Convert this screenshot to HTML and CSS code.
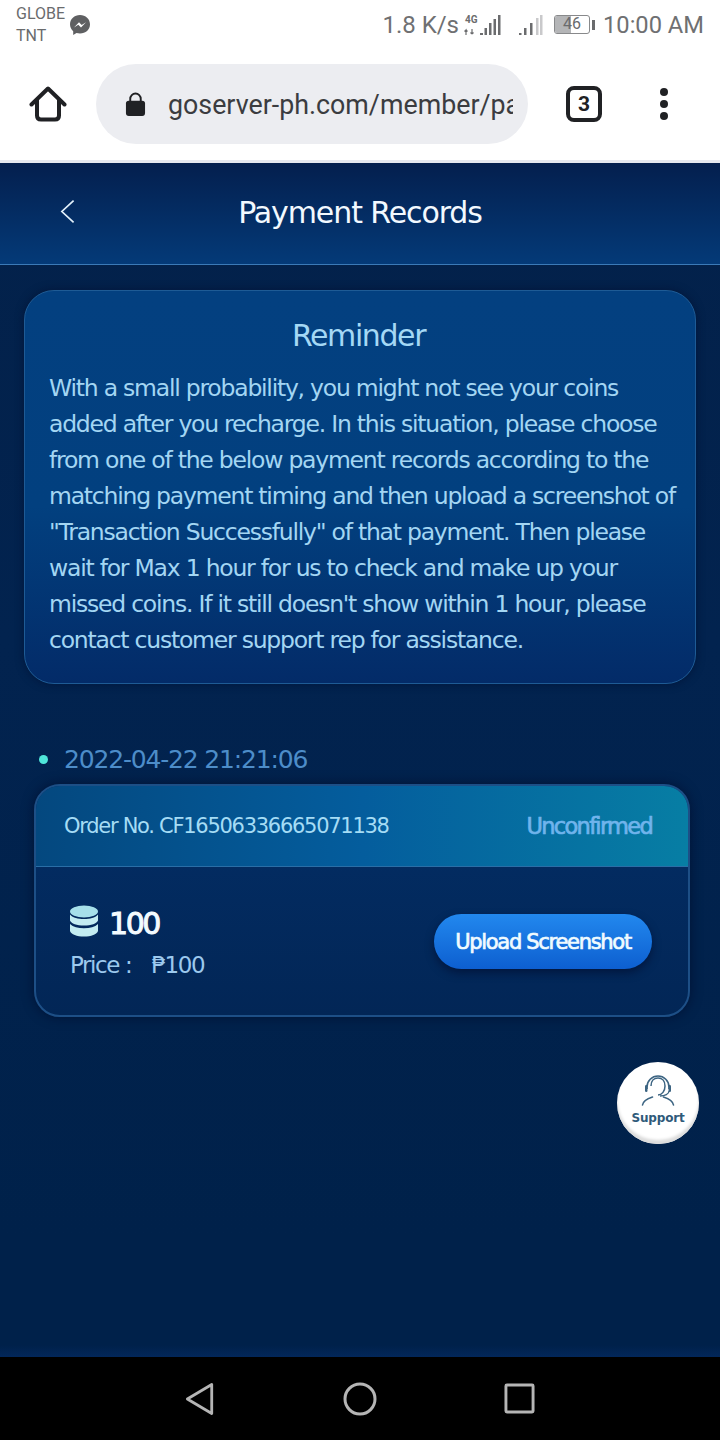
FILE: index.html
```html
<!DOCTYPE html>
<html lang="en">
<head>
<meta charset="utf-8">
<title>Payment Records</title>
<link rel="stylesheet" href="styles.css">
</head>
<body>
<div class="screen">
  <div class="status">
    <div class="carrier"><span>GLOBE</span><span>TNT</span></div>
    <svg class="messenger" viewBox="0 0 22 22"><path d="M11 1C5.400 1 1 5 1 10.300c0 2.800 1.200 5.200 3.200 6.900V21l3.300-1.900c1.100.3 2.300.5 3.500.5 5.600 0 10-4 10-9.300S16.600 1 11 1z" fill="#5f6062"/><path d="M5 13.500l5-5.300 2.700 2.700 4.300-2.700-5 5.300-2.700-2.700z" fill="#fff"/></svg>
    <div class="status-right">
      <span class="speed">1.8 K/s</span>
      <svg class="net" viewBox="0 0 38 24"><text x="1" y="10" class="net-t">4G</text><path d="M2 22l0-5-1.500 1.500M2 17l1.500 1.500M8 16v5M8 21l-1.500-1.500M8 21l1.500-1.500" fill="none" stroke="#6b6c6e" stroke-width="1.200"/><path d="M16 20h3v2h-3zM20.500 15h2.500v7h-2.500zM25 10h2.500v12H25zM29.500 6h2.500v16h-2.500zM34 2h2.500v20H34z" fill="#6b6c6e"/></svg>
      <svg class="signal" viewBox="0 0 24 24"><path d="M0 20h2.500v2H0zM5 15h2.500v7H5zM11 10h2.500v12H11z" fill="#6b6c6e"/><path d="M17 5h2.500v17H17zM21 2h2.500v20H21z" fill="#c9c9cb"/></svg>
      <div class="battery"><div class="battery-body"><div class="battery-fill"></div><span class="battery-num">46</span></div><div class="battery-tip"></div></div>
      <span class="clock">10:00 AM</span>
    </div>
  </div>

  <div class="toolbar">
    <svg class="home" viewBox="0 0 38 38"><path d="M2.500 19.500L19 3.500l16.500 16M8 15v15.500q0 4 4 4h14q4 0 4-4V15" fill="none" stroke="#202124" stroke-width="4" stroke-linecap="round" stroke-linejoin="round"/></svg>
    <div class="omnibox">
      <svg class="lock" viewBox="0 0 22 26"><path d="M5.500 10V7a5.500 5.500 0 0 1 11 0v3" fill="none" stroke="#202124" stroke-width="2"/><rect x="1" y="9" width="20" height="16" rx="3" fill="#202124"/></svg>
      <div class="url">goserver-ph.com/member/pa</div>
    </div>
    <div class="tabs">3</div>
    <div class="dots"><i></i><i></i><i></i></div>
  </div>

  <div class="page">
    <header class="head">
      <svg class="back" viewBox="0 0 16 26"><path d="M14.500 1.500L2 13l12.500 11.500" fill="none" stroke="#e3f1fb" stroke-width="1.800"/></svg>
      <h1>Payment Records</h1>
    </header>

    <section class="reminder">
      <h2>Reminder</h2>
      <p><span>With a small probability, you might not see your coins</span><span>added after you recharge. In this situation, please choose</span><span>from one of the below payment records according to the</span><span>matching payment timing and then upload a screenshot of</span><span>"Transaction Successfully" of that payment. Then please</span><span>wait for Max 1 hour for us to check and make up your</span><span>missed coins. If it still doesn't show within 1 hour, please</span><span>contact customer support rep for assistance.</span></p>
    </section>

    <div class="record-date"><i class="bullet"></i><span>2022-04-22 21:21:06</span></div>
    <section class="order">
      <div class="order-top">
        <span class="order-no">Order No. CF16506336665071138</span>
        <span class="order-state">Unconfirmed</span>
      </div>
      <div class="order-body">
        <div class="order-info">
          <div class="coins">
            <svg class="coin-icon" viewBox="0 0 28 32"><ellipse cx="14" cy="6.500" rx="14" ry="6" fill="#a6e0ea"/><path d="M0 9.500c3 3.500 8 4.500 14 4.500s11-1 14-4.500v6c-1 3-7 5-14 5s-13-2-14-5z" fill="#c3ecf1"/><path d="M0 19c3 3 8 4.200 14 4.200S25 22 28 19v7c-1 3.500-7 5.500-14 5.500S1 29.500 0 26z" fill="#c3ecf1"/></svg>
            <b>100</b>
          </div>
          <div class="price"><span>Price :</span><span>₱100</span></div>
        </div>
        <button class="upload">Upload Screenshot</button>
      </div>
    </section>

    <div class="support">
      <svg viewBox="0 0 34 32"><path d="M6 15V13a11 11 0 0 1 22 0v2" fill="none" stroke="#3c6482" stroke-width="1.600"/><rect x="4" y="11" width="2.500" height="7" rx="1.200" fill="#3c6482"/><rect x="27.500" y="11" width="2.500" height="7" rx="1.200" fill="#3c6482"/><path d="M10 12c0-5 3-8 7-8s7 3 7 8-3 9-7 9" fill="none" stroke="#3c6482" stroke-width="1.500"/><path d="M28 17c0 3-4 5-9 5" fill="none" stroke="#3c6482" stroke-width="1.300"/><path d="M1.500 31c.5-4 4-6 10-8M32.500 31c-.5-4-4-6-10-8" fill="none" stroke="#3c6482" stroke-width="1.600" stroke-linecap="round"/></svg>
      <span>Support</span>
    </div>
  </div>

  <nav class="sysnav">
    <svg viewBox="0 0 32 36" class="nav-back"><path d="M28.500 2.500v31L2.500 18z" fill="none" stroke="#b5b5b5" stroke-width="3" stroke-linejoin="round"/></svg>
    <svg viewBox="0 0 36 36" class="nav-home"><circle cx="18" cy="18" r="15" fill="none" stroke="#b5b5b5" stroke-width="3"/></svg>
    <svg viewBox="0 0 32 32" class="nav-square"><rect x="2" y="2" width="28" height="28" rx="1" fill="none" stroke="#b5b5b5" stroke-width="3"/></svg>
  </nav>
</div>
</body>
</html>
```
FILE: styles.css
```css
* { box-sizing: border-box; }
html, body { margin: 0; padding: 0; }
body { width: 720px; height: 1440px; overflow: hidden; font-family: "DejaVu Sans", sans-serif; }
.screen { width: 720px; height: 1440px; display: flex; flex-direction: column; background: #fff; }

.status { height: 54px; display: flex; align-items: flex-start; padding: 3px 16px 0; font-family: Roboto, sans-serif; color: #6a6b6d; flex: none; }
.carrier { display: flex; flex-direction: column; font-size: 16px; line-height: 22px; width: 53px; }
.messenger { width: 22px; height: 22px; margin-top: 11px; }
.status-right { margin-left: auto; display: flex; align-items: center; height: 43px; }
.speed, .clock { font-size: 24px; color: #6f7072; white-space: nowrap; }
.clock { font-size: 23.700px; }
.speed { margin-right: 5px; }
.net { width: 38px; height: 24px; margin-right: 17px; }
.net-t { font: 700 10px Roboto, sans-serif; fill: #6b6c6e; }
.signal { width: 24px; height: 24px; margin-right: 11px; }
.battery { display: flex; align-items: center; margin-right: 8px; }
.battery-body { position: relative; width: 36px; height: 19px; border: 1.500px solid #88898b; border-radius: 3px; overflow: hidden; }
.battery-fill { width: 46%; height: 100%; background: #b4b5b7; }
.battery-num { position: absolute; inset: 0; text-align: center; font-size: 16px; line-height: 16px; color: #6a6b6d; }
.battery-tip { width: 3px; height: 10px; background: #6a6b6d; margin-left: 2px; }

.toolbar { height: 106px; flex: none; display: flex; align-items: center; padding: 0 0 6px 29px; }
.home { width: 38px; height: 38px; margin-right: 29px; flex: none; }
.omnibox { width: 432px; height: 80px; border-radius: 40px; background: #ecedf1; display: flex; align-items: center; padding: 0 15px 0 29px; flex: none; }
.lock { width: 21px; height: 25px; margin-right: 22px; flex: none; }
.url { font-family: Roboto, sans-serif; font-size: 26.800px; padding-top: 2px; color: #3b3c40; white-space: nowrap; overflow: hidden; flex: 1; min-width: 0; }
.tabs { width: 36px; height: 36px; margin-left: 38px; border: 4px solid #202124; border-radius: 8px; font: 700 21px/28px Roboto, sans-serif; text-align: center; color: #202124; flex: none; }
.dots { margin-left: 58px; display: flex; flex-direction: column; gap: 4px; flex: none; }
.dots i { display: block; width: 8px; height: 8px; border-radius: 50%; background: #202124; }

.page { position: relative; flex: 1; min-height: 0; background: linear-gradient(180deg, #03214a 0%, #02234f 40%, #00214a 90%, #00214a 99%, #02275a 100%); border-top: 3px solid #e6e8ef; }
.head { height: 102px; display: flex; align-items: center; justify-content: center; position: relative; padding-bottom: 2px; background: linear-gradient(180deg, #041f4e 0%, #043a78 100%); border-bottom: 1px solid #3b7ab8; }
.head h1 { margin: 0; font-weight: 400; font-size: 30px; letter-spacing: -1.100px; color: #f2f9ff; }
.back { position: absolute; left: 60px; top: 36px; width: 15px; height: 25px; }

.reminder { margin: 25px 24px 0; height: 394px; padding: 27px 24px 0 24px; border-radius: 30px; border: 1px solid #1e5b95; background: linear-gradient(180deg, #034080 0%, #02407f 55%, #032b68 100%); box-shadow: 0 0 8px rgba(0, 10, 40, .5); }
.reminder h2 { margin: 0; padding-right: 3px; text-align: center; font-weight: 400; font-size: 30px; line-height: 36px; letter-spacing: -1.400px; color: #a4d8f5; }
.reminder p { margin: 16px 0 0; font-size: 23.500px; line-height: 36px; color: #a3d6f3; letter-spacing: -1.230px; }
.reminder p span { display: block; white-space: nowrap; }

.record-date { display: flex; align-items: center; margin: 57px 0 0 39px; height: 36px; color: #4d8dc9; font-size: 25px; letter-spacing: -1.170px; }
.bullet { width: 9px; height: 9px; border-radius: 50%; background: #4fe6da; margin-right: 16px; }

.order { margin: 7px 30px 0 34px; height: 233px; border-radius: 26px; border: 2px solid #1d4f86; overflow: hidden; background: linear-gradient(180deg, #032e66 0%, #022656 100%); box-shadow: 0 0 12px rgba(0, 8, 36, .6); }
.order-top { height: 81px; display: flex; justify-content: space-between; align-items: center; padding: 0 36px 0 28px; background: linear-gradient(90deg, #04487f 0%, #045d9d 50%, #077ea4 100%); border-bottom: 1px solid #2a6ea6; }
.order-no { font-size: 21px; letter-spacing: -1.280px; color: #a5dcf5; }
.order-state { font-size: 22.500px; -webkit-text-stroke: .7px #70b4ec; letter-spacing: -1.700px; color: #70b4ec; }
.order-body { display: flex; justify-content: space-between; align-items: center; padding: 0 36px 0 34px; height: 149px; }
.coins { display: flex; align-items: flex-start; gap: 11px; }
.coin-icon { width: 28px; height: 32px; }
.coins b { font-size: 30px; font-weight: 400; -webkit-text-stroke: 1px #f3fbff; letter-spacing: -2.400px; color: #f3fbff; line-height: 36px; margin-top: 1px; }
.price { display: flex; gap: 20px; margin-top: 10px; font-size: 23px; letter-spacing: -1.400px; color: #9cc9ee; }
.upload { width: 218px; height: 55px; border: 0; border-radius: 28px; padding: 0; background: linear-gradient(180deg, #2288ee 0%, #0d5fd0 100%); color: #f0fbff; font: 400 21px "DejaVu Sans", sans-serif; -webkit-text-stroke: .7px #f0fbff; letter-spacing: -1.300px; box-shadow: 0 4px 8px rgba(0, 10, 40, .55); }

.support { position: absolute; left: 617px; top: 899px; width: 82px; height: 82px; border-radius: 50%; background: #fff; box-shadow: inset 0 -4px 3px #dcdcdc; display: flex; flex-direction: column; align-items: center; padding-top: 12px; }
.support svg { width: 34px; height: 32px; }
.support span { font-size: 12px; font-weight: 700; letter-spacing: -.2px; color: #2f5a7a; line-height: 14px; margin-top: 5px; }

.sysnav { height: 83px; flex: none; background: #000; display: flex; align-items: center; padding: 0 0 0 185px; }
.nav-back { width: 30px; height: 34px; margin-right: 127px; }
.nav-home { width: 36px; height: 36px; margin-right: 126px; }
.nav-square { width: 31px; height: 31px; }
```
